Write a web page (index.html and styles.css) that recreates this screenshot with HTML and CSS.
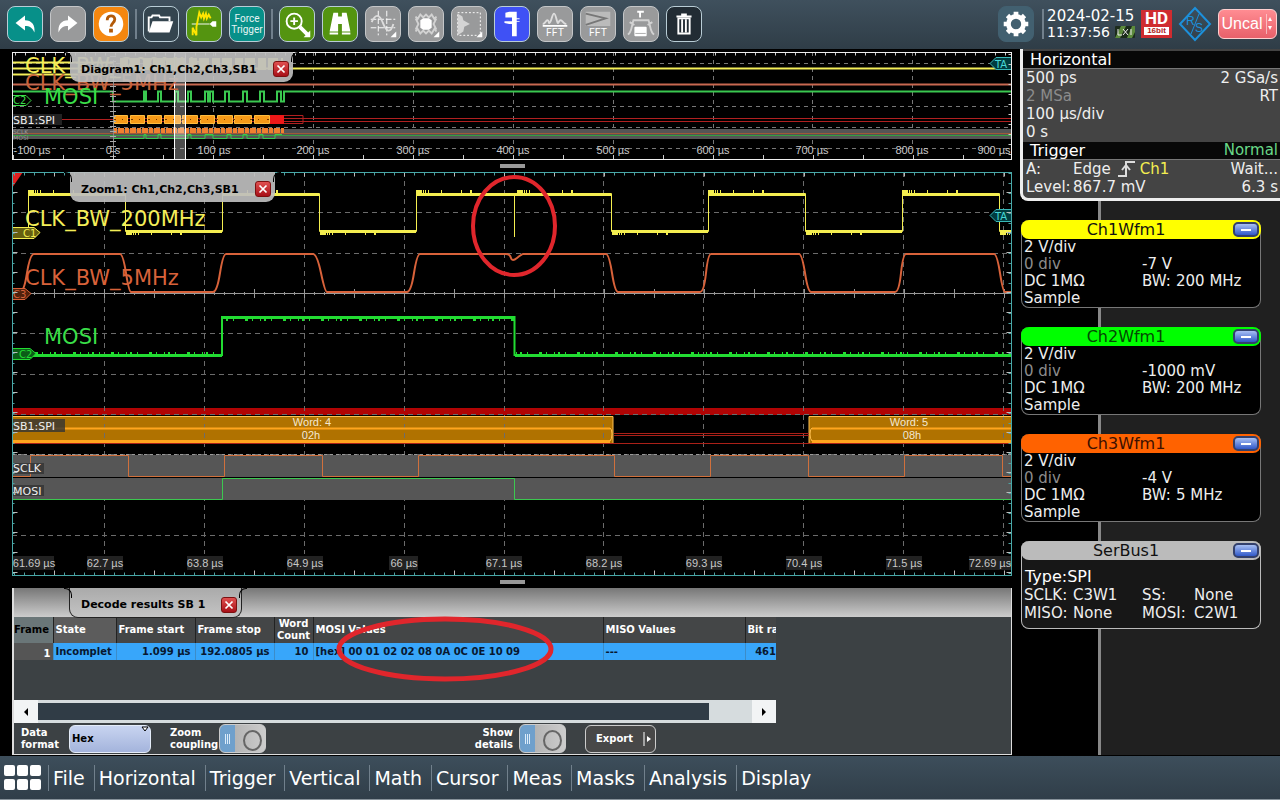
FILE: index.html
```html
<!DOCTYPE html>
<html lang="en">
<head>
<meta charset="utf-8">
<title>Oscilloscope</title>
<link rel="stylesheet" href="styles.css">
</head>
<body>
<header class="topbar">
  <div class="tools">
    <div class="group">
      <button class="tool teal" aria-label="Undo"><svg viewBox="0 0 36 36"><path fill="#fff" d="M8 17 18 9v5c7 0 11 5 10 13-2-5-5-7-10-7v5z"/></svg></button>
      <button class="tool gray" aria-label="Redo"><svg viewBox="0 0 36 36"><path fill="#fff" d="M28 17 18 9v5c-7 0-11 5-10 13 2-5 5-7 10-7v5z"/></svg></button>
      <button class="tool orange" aria-label="Help"><svg viewBox="0 0 36 36"><circle cx="18" cy="18" r="13" fill="#fff"/><path d="M14 14c0-6 8-6 8-1 0 4-4 4-4 8" fill="none" stroke="#b35a08" stroke-width="3"/><rect x="16" y="23" width="4" height="4" fill="#b35a08"/></svg></button>
    </div>
    <span class="sep"></span>
    <div class="group">
      <button class="tool slate" aria-label="Open"><svg viewBox="0 0 36 36"><path d="M5 26V11h3l1-2h7l1 2h10v4" fill="none" stroke="#fff" stroke-width="2"/><path d="M5 27 9 15h22l-4 12z" fill="#fff"/></svg></button>
      <button class="tool green" aria-label="Autoset"><svg viewBox="0 0 36 36"><path d="M5 18h19" stroke="#fff"/><path d="M24 18l3-3h4v6h-4z" fill="#fff"/><path d="M6 30V22l4 8V21l3-15 2 5 2-4 1 5 2-5 1 5 2-4 2 4" fill="none" stroke="#ffe600" stroke-width="2"/></svg></button>
      <button class="tool teal force">Force Trigger</button>
    </div>
    <span class="sep"></span>
    <div class="group">
      <button class="tool green" aria-label="Zoom"><svg viewBox="0 0 36 36" fill="none" stroke="#fff" stroke-width="2"><circle cx="15" cy="15" r="8"/><path d="M15 11v8M11 15h8"/><path d="M21 21l9 9" stroke-width="4"/><path d="M32 25v7h-7z" fill="#fff" stroke="none"/></svg></button>
      <button class="tool green" aria-label="Find"><svg viewBox="0 0 36 36"><path fill="#fff" d="M11 6h5v4h4V6h5l4 20h-9v-8h-4v8H7zM7 27h9v2H7zM20 27h9v2h-9z"/></svg></button>
      <button class="tool gray" aria-label="Cursor"><svg viewBox="0 0 36 36" fill="none" stroke="#fff"><path d="M13 4v26M22 4v26M5 13h26M5 22h26" stroke-dasharray="6 2"/><path d="M6 16c4-9 8-9 12 1s8 11 11 1" stroke="#ddd" stroke-width="2"/><path d="M32 26v6h-6z" fill="#fff" stroke="none"/></svg></button>
      <button class="tool gray" aria-label="Mask"><svg viewBox="0 0 36 36"><path d="M7 10l2 3 3-5 3 3 3-3 3 3 3-3 3 5 2-3M7 26l2-3 3 5 3-3 3 3 3-3 3 3 3-5 2 3M7 12l3 6-3 6M29 12l-3 6 3 6" fill="none" stroke="#d2d2d2" stroke-width="2"/><path d="M12 14l3-2h6l3 2v8l-3 2h-6l-3-2z" fill="#fff"/><path d="M32 26v6h-6z" fill="#fff"/></svg></button>
      <button class="tool gray" aria-label="Histogram"><svg viewBox="0 0 36 36"><rect x="6" y="6" width="24" height="24" fill="none" stroke="#fff" stroke-dasharray="2 2"/><path d="M6 7l5 3 1 4 7 4-6 3-1 5-6 4z" fill="#d4d4d4"/><path d="M32 26v6h-6z" fill="#fff"/></svg></button>
      <button class="tool blue" aria-label="Measure"><svg viewBox="0 0 36 36"><path fill="#fff" d="M11 6l4-1h8v7h3v1h-3v2h3v1h-3v15h-5V18h-3l-5-1v-2h8v-4h-7z"/></svg></button>
      <button class="tool gray" aria-label="FFT"><svg viewBox="0 0 36 36"><path d="M5 18c3 0 3-4 5-4s1 3 2 3c2 0 3-10 5-10s3 10 4 10 1-3 3-3 3 4 6 4" fill="none" stroke="#ddd" stroke-width="2"/><path d="M5 20h26" stroke="#fff" stroke-width="2"/><text x="18" y="31" class="icontext">FFT</text></svg></button>
      <button class="tool gray" aria-label="Gated FFT"><svg viewBox="0 0 36 36"><path d="M5 5h26v15H5z" fill="#bbb"/><path d="M5 7l21 5-21 7" fill="none" stroke="#777" stroke-width="2"/><text x="18" y="31" class="icontext">FFT</text></svg></button>
      <button class="tool gray" aria-label="Mask trigger"><svg viewBox="0 0 36 36"><path d="M4 29c4-1 4-9 6-15h16c2 6 2 14 6 15M6 16l5 3M30 16l-5 3" fill="none" stroke="#d2d2d2" stroke-width="2"/><path d="M14 5h7M17 5v6" stroke="#fff" stroke-width="2"/><rect x="11" y="21" width="13" height="10" rx="1" fill="#fff"/><path d="M12 28h11" stroke="#aaa"/></svg></button>
      <button class="tool dark" aria-label="Delete"><svg viewBox="0 0 36 36"><path d="M10 10h16M15 8h6" stroke="#fff" stroke-width="2"/><path d="M12 12v16h12V12z" fill="none" stroke="#fff" stroke-width="2"/><path d="M16 13v14M20 13v14" stroke="#fff" stroke-width="2"/></svg></button>
    </div>
  </div>
  <div class="status">
    <button class="tool gear" aria-label="Settings"><svg viewBox="0 0 36 36"><circle cx="18" cy="18" r="8" fill="none" stroke="#fff" stroke-width="5"/><path d="M18 5v4M18 27v4M5 18h4M27 18h4M9 9l3 3M24 24l3 3M27 9l-3 3M12 24l-3 3" stroke="#fff" stroke-width="5"/></svg></button>
    <span class="sep"></span>
    <div class="clock"><div class="date">2024-02-15</div><div class="time">11:37:56 <svg class="lxi" viewBox="0 0 20 12"><rect width="20" height="12" rx="1" fill="#1c2c1c"/><path d="M0 12L6 0h5L5 12zM12 12l5-12h3v6l-3 6z" fill="#5c8a3c"/><path d="M3 3v6h4M8 3l5 6M13 3l-5 6M16 3v6" fill="none" stroke="#eee"/></svg></div></div>
    <div class="hd"><b>HD</b><span>16bit</span></div>
    <svg class="rs" viewBox="0 0 34 36"><path d="M17 2l15 16-15 16L2 18z" fill="none" stroke="#1c90dc" stroke-width="2"/><path d="M21 8l-8 20" stroke="#1c90dc"/><text x="8" y="19">R</text><text x="17" y="26">S</text></svg>
    <button class="uncal">Uncal<svg viewBox="0 0 7 20"><path d="M0 0v20" stroke="#fff"/><path d="M2 7l2-4 2 4zM2 12l2 4 2-4z" fill="#fff"/></svg></button>
  </div>
</header>

<main class="screen">
  <section class="plots">
    <div class="plot">
      <svg class="chart" viewBox="12 52 1000 108" role="img" aria-label="Diagram1">
        <g stroke="#777" stroke-dasharray="4 4">
          <path d="M213.500 52v96M313.500 52v96M413.500 52v96M513.500 52v96M613.500 52v96M713.500 52v96M812.500 52v96M912.500 52v96M12 63.500h1000M12 106.500h1000M12 127.500h1000M12 148.500h1000"/>
        </g>
        <rect x="12" y="129" width="1000" height="10" fill="#555"/>
        <path d="M12 133.500h1000" stroke="#a05a38"/><path d="M12 135.500h1000" stroke="#35a040"/>
        <path d="M12 62.500h101M12 68.500h101M12 74.500h101M112 68.500h900" stroke="#f4ee58" stroke-width="2"/>
        <path d="M12 84.500h1000" stroke="#c86850" stroke-width="2"/>
        <path d="M120 64h163" stroke="#f4ee58" stroke-width="12" stroke-dasharray="8 2 10 3"/>
        <path d="M12 91.500h101v10h31v-10h2v10h12v-10h3v10h14v-10h3v10h10v-10h3v10h14v-10h3v10h2v-10h3v10h12v-10h4v10h14v-10h4v10h13v-10h4v10h13v-10h4v10h3v-10H1012" fill="none" stroke="#3ac850" stroke-width="2"/>
        <path d="M113 118.500h899M60 119.500h60M113 121.500h899M284 115.500h19v8h-19" fill="none" stroke="#b02020"/>
        <g fill="#f79a18" stroke="#ffbd40"><path d="M114.500 115.500h13v8h-13zM130.500 115.500h14v8h-14zM147.500 115.500h14v8h-14zM164.500 115.500h16v8h-16zM182.500 115.500h15v8h-15zM200.500 115.500h14v8h-14zM217.500 115.500h15v8h-15zM234.500 115.500h17v8h-17zM254.500 115.500h15v8h-15z"/></g>
        <path d="M270 115h14v9h-14z" fill="#ee1818"/>
        <path d="M114 119.500h156" stroke="#733800" stroke-dasharray="2 6 1 8"/>
        <path d="M113 130.500h171" stroke="#f08030" stroke-width="5" stroke-dasharray="4 1 6 1"/>
        <path d="M113 138.500h31v-4h2v4h12v-4h3v4h27v-4h3v4h14v-4h8v4h14v-4h4v4h12v-4h4v4h12v-4h4v4h12v-4h7" fill="none" stroke="#3ac850"/>
        <path d="M113.500 60v100" stroke="#888"/><path d="M113 56v104" stroke="#aaa" stroke-width="6" stroke-dasharray="1 4"/>
        <path d="M174 52h12v108h-12z" fill="#fff" fill-opacity=".3"/><path d="M174.500 52v108M185.500 52v108" stroke="#fff"/>
        <g class="name"><text x="25" y="73" fill="#f4ee58">CLK_BW_200MHz</text><text x="25" y="90" fill="#c8643c">CLK_BW_5MHz</text><text x="44" y="104" fill="#3ade48">MOSI</text></g>
        <path d="M12 95.500h14l5 5-5 5H12z" fill="none" stroke="#3ade48"/><text x="13" y="104" fill="#3ade48" class="tag">C2</text>
        <path d="M1012 57.500h-16l-6 6 6 6h16z" fill="#003c40" stroke="#38b8b8"/><text x="995" y="68" fill="#48d8d8" class="tag">TA</text>
        <rect x="13" y="114" width="49" height="11" fill="#222"/><text class="bus" x="13" y="124">SB1:SPI</text>
        <text class="tiny" x="13" y="134">SCLK</text><text class="tiny" x="13" y="140">MOSI</text>
        <g class="axis"><text x="32" y="154">-100 µs</text><text x="113" y="154">0 s</text><text x="214" y="154">100 µs</text><text x="313" y="154">200 µs</text><text x="413" y="154">300 µs</text><text x="513" y="154">400 µs</text><text x="613" y="154">500 µs</text><text x="713" y="154">600 µs</text><text x="812" y="154">700 µs</text><text x="912" y="154">800 µs</text><text x="994" y="154">900 µs</text></g>
        <g stroke="#ccc"><path d="M13 157h998" stroke-width="4" stroke-dasharray="1 49"/><path d="M15 54h996M1010 54v104" stroke-width="3" stroke-dasharray="1 9"/></g>
        <rect x="12.500" y="52.500" width="999" height="107" fill="none" stroke="#eee"/>
      </svg>
      <div class="tab"><span>Diagram1: Ch1,Ch2,Ch3,SB1</span><button class="close" aria-label="Close Diagram1"><svg viewBox="0 0 16 16"><path d="M4 4l8 8M12 4l-8 8"/></svg></button></div>
    </div>
    <div class="handle"><i></i></div>
    <div class="plot">
      <svg class="chart" viewBox="12 172 1000 404" role="img" aria-label="Zoom1">
        <rect x="12" y="408" width="1000" height="7" fill="#b00404"/>
        <path d="M12 416h601v27H12zM809 416h203v27H809z" fill="#b07200"/>
        <g stroke="#6c6c6c" stroke-dasharray="5 4">
          <path d="M104.500 172v382M204.500 172v382M304.500 172v382M404.500 172v382M504.500 172v382M603.500 172v382M703.500 172v382M803.500 172v382M903.500 172v382M1003.500 172v382M12 212.500h1000M12 253.500h1000M12 333.500h1000M12 374.500h1000M12 414.500h1000M12 454.500h1000M12 535.500h1000"/>
        </g>
        <rect x="12" y="455" width="1000" height="22" fill="#565656"/><rect x="12" y="478" width="1000" height="22" fill="#565656"/>
        <g stroke="#999"><path d="M12 293.500h1000"/><path d="M14 293.500h998" stroke-width="3" stroke-dasharray="1 9"/><path d="M54 293.500h958" stroke-width="9" stroke-dasharray="1 49"/></g>
        <g fill="none" stroke="#f4ee50">
          <path d="M12 231.500H28.500V193.500H125.500V231.500H222.500V193.500H319.500V231.500H416.500V193.500H611.500V231.500H708.500V193.500H805.500V231.500H902.500V193.500H999.500V231.500H1012M514.500 193v44"/>
          <path d="M12 231.500h16M28 194.500h97M126 231.500h96M222 194.500h97M320 231.500h96M416 194.500h195M612 231.500h96M708 194.500h97M806 231.500h96M902 194.500h97M1000 231.500h12" stroke-width="3"/>
          <path d="M28 192.500h97M126 232.500h96M222 192.500h97M320 232.500h96M416 192.500h195M612 232.500h96M708 192.500h97M806 232.500h96M902 192.500h97M1000 232.500h12" stroke-width="5" stroke-dasharray="6 1 1 1 1 2 1 12 1 19 1 8 2 45"/>
        </g>
        <path d="M12 292H20Q24 292 27 273T34 254H120Q123 254 126 273T131 292H213Q217 292 220 273T226 254H313Q317 254 321 273T327 292H407Q411 292 414 273T420 254H506Q510 254 511 258T517 258T523 254H606Q609 254 612 273T618 292H700Q704 292 706 273T711 254H799Q802 254 805 273T811 292H895Q899 292 901 273T906 254H994Q997 254 1000 273T1005 292H1012" fill="none" stroke="#d8623a" stroke-width="2"/>
        <path d="M12 355.500H222M222 317.500H514M515 355.500H1012" fill="none" stroke="#22dc32" stroke-width="3"/>
        <path d="M222 316v40M514.500 316v40" stroke="#22dc32" stroke-width="2"/>
        <path d="M12 354.500H222M222 318.500h292M516 354.500h496" stroke="#22dc32" stroke-width="5" stroke-dasharray="1 3 2 5 1 11 3 4 1 7"/>
        <path d="M12 428.500H610M812 428.500h200" stroke="#ffa51e" stroke-width="2"/><path d="M12 441.500H610M812 441.500h200" stroke="#ffa51e" stroke-width="3"/>
        <path d="M12 416.500h601v27M1012 416.500H809v27M610 428q2 1 2 6t-2 7M812 428q-2 1-2 6t2 7" fill="none" stroke="#ffc050"/>
        <path d="M614 433.500h195M614 435.500h195M12 443.500h1000" stroke="#aa2018"/>
        <path d="M12 476.500H30.500V455.500H128.500V476.500H224.500V455.500H322.500V476.500H418.500V455.500H614.500V476.500H710.500V455.500H808.500V476.500H904.500V455.500H1002.500V476.500H1012" fill="none" stroke="#d0703c"/>
        <path d="M12 499.500H222.500V478.500H514.500V499.500H1012" fill="none" stroke="#3cc850"/>
        <path d="M12 454.500h1000" stroke="#999" stroke-dasharray="3 3"/>
        <path d="M12 172h11l-11 16z" fill="#e02020"/>
        <path d="M12 227.500h22l6 5-6 6H12z" fill="#665f10" stroke="#f4ee50"/><text class="tag" x="23" y="237" fill="#f4ee50">C1</text>
        <path d="M12 288.500h13l6 5-6 6H12z" fill="#50210c" stroke="#d8623a"/><text class="tag" x="13" y="298" fill="#d8623a">C3</text>
        <path d="M12 348.500h18l6 5-6 6H12z" fill="#0c5c18" stroke="#22dc32"/><text class="tag" x="19" y="358" fill="#22dc32">C2</text>
        <path d="M1012 209.500h-16l-6 6 6 6h16z" fill="#003c40" stroke="#38b8b8"/><text class="tag" x="995" y="220" fill="#48d8d8">TA</text>
        <g class="name"><text x="25" y="226" fill="#f4ee58">CLK_BW_200MHz</text><text x="25" y="285" fill="#d8623a">CLK_BW_5MHz</text><text x="44" y="344" fill="#3ade48">MOSI</text></g>
        <path d="M13 419h52v13H13zM13 463h31v11H13zM13 485h31v11H13z" fill="#333" fill-opacity=".8"/>
        <g class="bus"><text x="13" y="430">SB1:SPI</text><text x="13" y="472">SCLK</text><text x="13" y="495">MOSI</text></g>
        <g class="word"><text x="312" y="426">Word: 4</text><text x="311" y="439">02h</text><text x="909" y="426">Word: 5</text><text x="912" y="439">08h</text></g>
        <path d="M13 556h41v14H13zM87 556h36v14H87zM187 556h36v14h-36zM287 556h36v14h-36zM389 556h29v14h-29zM486 556h36v14h-36zM586 556h36v14h-36zM686 556h36v14h-36zM786 556h36v14h-36zM886 556h36v14h-36zM969 556h42v14h-42z" fill="#222"/>
        <g class="axis"><text x="34" y="567">61.69 µs</text><text x="105" y="567">62.7 µs</text><text x="205" y="567">63.8 µs</text><text x="305" y="567">64.9 µs</text><text x="404" y="567">66 µs</text><text x="504" y="567">67.1 µs</text><text x="604" y="567">68.2 µs</text><text x="704" y="567">69.3 µs</text><text x="804" y="567">70.4 µs</text><text x="904" y="567">71.5 µs</text><text x="990" y="567">72.69 µs</text></g>
        <g stroke="#4ca0a0"><path d="M14 174h998M14 574h998M13 173v402M1010 173v402" stroke-width="3" stroke-dasharray="1 9"/></g>
        <path d="M54 174h958M54 573h958" stroke="#bbb" stroke-width="5" stroke-dasharray="1 49"/>
        <path d="M15 192v384M1009 192v384" stroke="#bbb" stroke-width="5" stroke-dasharray="1 19"/>
        <rect x="12.500" y="172.500" width="999" height="403" fill="none" stroke="#48a8a8"/>
        <ellipse cx="514" cy="226" rx="41" ry="49" fill="none" stroke="#e0262c" stroke-width="4"/>
      </svg>
      <div class="tab"><span>Zoom1: Ch1,Ch2,Ch3,SB1</span><button class="close" aria-label="Close Zoom1"><svg viewBox="0 0 16 16"><path d="M4 4l8 8M12 4l-8 8"/></svg></button></div>
    </div>
    <div class="handle"><i></i></div>
    <section class="decode">
      <div class="tabbar"><div class="tab decodetab"><span>Decode results SB 1</span><button class="close" aria-label="Close decode results"><svg viewBox="0 0 16 16"><path d="M4 4l8 8M12 4l-8 8"/></svg></button></div></div>
      <div class="results">
        <table>
          <colgroup><col class="c-frame"><col class="c-state"><col class="c-time"><col class="c-time"><col class="c-count"><col class="c-mosi"><col class="c-miso"><col class="c-bit"></colgroup>
          <thead><tr><th class="first">Frame</th><th class="lit">State</th><th>Frame start</th><th>Frame stop</th><th>Word Count</th><th>MOSI Values</th><th>MISO Values</th><th>Bit ra</th></tr></thead>
          <tbody><tr><td class="num">1</td><td>Incomplet</td><td class="r">1.099 µs</td><td class="r">192.0805 µs</td><td class="r">10</td><td>[hex] 00 01 02 02 08 0A 0C 0E 10 09</td><td>---</td><td class="r">461</td></tr></tbody>
        </table>
        <div class="scroll"><button aria-label="Scroll left"><svg viewBox="0 0 8 8"><path d="M6 0v8L2 4z"/></svg></button><div class="track"><div class="thumb"></div></div><button aria-label="Scroll right"><svg viewBox="0 0 8 8"><path d="M2 0v8l4-4z"/></svg></button></div>
      </div>
      <div class="options">
        <label for="fmt">Data format</label>
        <div class="pick"><select id="fmt" class="format"><option>Hex</option></select><svg viewBox="0 0 8 6"><path d="M1 1h6L4 5z" fill="#fff" stroke="#000"/></svg></div>
        <label for="zc" class="zc">Zoom coupling</label>
        <input type="checkbox" id="zc" class="toggle">
        <label for="sd" class="sd">Show details</label>
        <input type="checkbox" id="sd" class="toggle">
        <button class="export">Export<svg viewBox="0 0 8 14"><path d="M1 0v14" stroke="#fff"/><path d="M4 4l4 3-4 3z" fill="#fff"/></svg></button>
      </div>
      <svg class="mark" viewBox="0 0 218 68"><ellipse cx="109" cy="34" rx="106" ry="30" fill="none" stroke="#e0262c" stroke-width="5"/></svg>
    </section>
  </section>

  <aside class="side">
    <section class="info">
      <h2>Horizontal</h2>
      <div class="block">
        <p><span>500 ps</span><span>2 GSa/s</span></p><p><span class="dim">2 MSa</span><span>RT</span></p><p><span>100 µs/div</span></p><p><span>0 s</span></p>
      </div>
      <h2>Trigger<span class="normal">Normal</span></h2>
      <div class="block">
        <p><span class="key">A:</span><span>Edge</span><svg class="edge" viewBox="0 0 18 16"><path d="M0 15h8V1h9M4 9l4-5 4 5" fill="none" stroke="#ddd" stroke-width="2"/></svg><span class="ch">Ch1</span><span class="end">Wait...</span></p>
        <p><span class="lev">Level:</span><span>867.7 mV</span><span class="end">6.3 s</span></p>
      </div>
    </section>
    <section class="card yellow"><h3>Ch1Wfm1<button aria-label="Minimize Ch1Wfm1"></button></h3>
      <div class="grid"><span>2 V/div</span><span></span><span class="dim">0 div</span><span>-7 V</span><span>DC 1MΩ</span><span><i>BW:</i>200 MHz</span><span>Sample</span></div></section>
    <section class="card lime"><h3>Ch2Wfm1<button aria-label="Minimize Ch2Wfm1"></button></h3>
      <div class="grid"><span>2 V/div</span><span></span><span class="dim">0 div</span><span>-1000 mV</span><span>DC 1MΩ</span><span><i>BW:</i>200 MHz</span><span>Sample</span></div></section>
    <section class="card tangerine"><h3>Ch3Wfm1<button aria-label="Minimize Ch3Wfm1"></button></h3>
      <div class="grid"><span>2 V/div</span><span></span><span class="dim">0 div</span><span>-4 V</span><span>DC 1MΩ</span><span><i>BW:</i>5 MHz</span><span>Sample</span></div></section>
    <section class="card silver"><h3>SerBus1<button aria-label="Minimize SerBus1"></button></h3>
      <p class="type">Type:<span>SPI</span></p>
      <div class="busgrid"><span>SCLK:</span><span>C3W1</span><span>SS:</span><span>None</span><span>MISO:</span><span>None</span><span>MOSI:</span><span>C2W1</span></div></section>
  </aside>
</main>

<nav class="menu">
  <button class="apps" aria-label="Applications"><i></i><i></i><i></i><i></i><i></i><i></i></button>
  <button>File</button><button>Horizontal</button><button>Trigger</button><button>Vertical</button><button>Math</button><button>Cursor</button><button>Meas</button><button>Masks</button><button>Analysis</button><button>Display</button>
</nav>
</body>
</html>
```
FILE: styles.css
```css
* { box-sizing: border-box; }
body { margin: 0; min-height: 100vh; display: flex; flex-direction: column; background: #000; color: #eee; font-family: "DejaVu Sans", sans-serif; font-size: 15px; }
button, select, input { font: inherit; color: inherit; margin: 0; padding: 0; border: 0; background: none; }
h2, h3, p { margin: 0; font-weight: 400; }
svg { display: block; }

/* top toolbar */
.topbar { display: flex; justify-content: space-between; align-items: center; height: 49px; padding: 0 3px 1px 7px; background: linear-gradient(#3f505d, #2f3d47); }
.tools, .status { display: flex; align-items: center; gap: 6px; }
.group { display: flex; gap: 7px; }
.sep { width: 2px; height: 30px; background: #71808c; }
.tool { width: 36px; height: 36px; border: 1px solid #b9cdd6; border-radius: 8px; overflow: hidden; }
.tool svg { width: 34px; height: 34px; }
.teal { background: #079089; }
.gray { background: #999a9b; border-color: #c4c6c8; }
.orange { background: #f5870f; }
.slate { background: #34454f; }
.green { background: #549410; }
.blue { background: #3f51f5; }
.dark { background: #222c34; }
.gear { background: #426070; border-color: #426070; }
.force { font: 10px/11px "Roboto", sans-serif; color: #e4f4f4; }
.icontext { font: 11px "Roboto", sans-serif; fill: #fff; text-anchor: middle; }
.clock { font-size: 14px; line-height: 16px; color: #fff; }
.date { font-size: 15px; }
.time { display: flex; align-items: center; gap: 5px; }
.lxi { width: 20px; height: 12px; }
.status .sep { margin: 0 -3px 0 2px; }
.hd { width: 31px; height: 28px; background: #cf2c30; text-align: center; color: #fff; }
.hd b { display: block; font: bold 17px/17px "Roboto", sans-serif; }
.hd span { display: block; margin: 0 3px; background: #fff; color: #b02020; font: bold 8px/8px "Liberation Sans", sans-serif; }
.rs { width: 34px; height: 36px; }
.rs text { font: 12px "Liberation Sans", sans-serif; fill: #1c90dc; }
.uncal { display: flex; align-items: center; justify-content: center; gap: 4px; width: 59px; height: 30px; border: 1px solid #ffd0d0; border-radius: 6px; background: linear-gradient(#ff8c92, #e8606a); font: 16px "Liberation Sans", sans-serif; color: #fff; }
.uncal svg { width: 7px; height: 20px; }

/* plots */
.screen { flex: 1; display: flex; }
.plots { flex: 1; min-width: 0; padding: 3px 0 0 12px; }
.plot { position: relative; }
.chart { width: 100%; height: auto; }
.chart text { font-family: "DejaVu Sans", sans-serif; }
.chart .name text { font-size: 21px; }
.chart .tag { font-size: 10px; }
.chart .bus, .chart .bus text { font-size: 11px; fill: #eee; }
.chart .tiny { font-size: 6px; fill: #999; }
.chart .axis text { font: 11px "Liberation Sans", sans-serif; fill: #c8c8c8; text-anchor: middle; }
.chart .word text { font: 11px "Liberation Sans", sans-serif; fill: #f4e8d0; text-anchor: middle; }
.handle { height: 12px; padding-top: 4px; }
.handle i { display: block; width: 25px; height: 4px; margin: 0 auto; background: #999; }
.tab { position: absolute; left: 58px; top: 0; display: flex; align-items: center; gap: 16px; height: 30px; padding: 4px 4px 0 11px; border-radius: 0 0 9px 9px; background: rgba(190, 190, 190, .92); color: #000; font: bold 11px "DejaVu Sans", sans-serif; white-space: nowrap; }
.tab::before, .tab::after { content: ""; position: absolute; top: 0; width: 7px; height: 9px; border-top: 1px solid #000; }
.tab::before { left: -6px; border-right: 1px solid #000; border-top-right-radius: 7px; }
.tab::after { right: -6px; border-left: 1px solid #000; border-top-left-radius: 7px; }
.close { width: 16px; height: 16px; border: 1px solid #7c1010; border-radius: 3px; background: linear-gradient(#e05050, #a81018); }
.close svg { width: 14px; height: 14px; stroke: #fff; stroke-width: 2; }

/* decode results */
.decode { position: relative; border: solid #ddd; border-width: 0 1px 1px 2px; background: #3c4144; font: bold 10px/12px "DejaVu Sans", sans-serif; color: #fff; }
.tabbar { height: 29px; padding-left: 55px; background: linear-gradient(#777, #ccc); }
.decodetab { position: relative; left: auto; display: inline-flex; border: solid #222; border-width: 0 1px 1px; background: linear-gradient(#aaa, #c4c4c4); }
.results { width: 762px; max-width: 100%; overflow: hidden; }
table { table-layout: fixed; width: 762px; border-collapse: collapse; }
.c-frame { width: 39px; } .c-state { width: 63px; } .c-time { width: 79px; } .c-count { width: 39px; } .c-mosi { width: 290px; } .c-miso { width: 142px; } .c-bit { width: 31px; }
th, td { padding: 0 2px; text-align: left; white-space: nowrap; overflow: hidden; }
th { height: 26px; border-right: 1px solid #222; background: #444647; }
th:nth-child(5) { white-space: normal; text-align: center; padding: 0; }
th.first { background: #6a7678; color: #000; padding: 0; }
th.lit { background: #5c5c5c; }
th:last-child { padding-right: 0; border-right: 0; }
td { height: 17px; background: #38a6fa; color: #081830; border-right: 1px solid #3c8cc8; }
td.r { text-align: right; padding-right: 4px; }
td.num { text-align: right; background: #555; color: #fff; vertical-align: bottom; }
td.r:last-child { padding-right: 0; border-right: 0; }
.scroll { display: flex; height: 23px; margin-top: 40px; }
.scroll button { width: 24px; background: #f2f4f5; display: grid; place-items: center; }
.scroll svg { width: 8px; height: 8px; }
.track { flex: 1; padding: 3px 0; background: #d6dcde; }
.thumb { width: 94%; height: 17px; background: #303c46; }
.options { display: flex; align-items: center; height: 31px; padding-left: 7px; }
.options label { width: 48px; }
.pick { position: relative; }
.pick svg { position: absolute; right: 2px; top: 1px; width: 8px; height: 6px; pointer-events: none; }
.format { display: block; width: 82px; height: 28px; padding: 0 2px; border: 1px solid #e4ecf8; border-radius: 6px; appearance: none; background: linear-gradient(#c8d4f0, #a4b4dc); color: #000; }
.options .zc { margin-left: 19px; width: 49px; }
.toggle { appearance: none; position: relative; width: 47px; height: 29px; border: 1px solid #ccc; border-radius: 6px; background: linear-gradient(90deg, #6fa0cc 15px, #b4b4b4 15px, #ccc); }
.toggle::before { content: ""; position: absolute; left: 5px; top: 9px; width: 6px; height: 10px; background: repeating-linear-gradient(90deg, #dcecfa 0 1px, transparent 1px 2px); }
.toggle::after { content: ""; position: absolute; left: 23px; top: 5px; width: 15px; height: 17px; border: 2px solid #666; border-radius: 50%; }
.options .sd { margin-left: 206px; width: 47px; padding-right: 6px; text-align: right; }
.export { display: flex; align-items: center; justify-content: space-between; width: 71px; height: 28px; margin-left: 19px; padding: 0 4px 0 10px; border: 1px solid #ccc; border-radius: 6px; background: #484848; }
.export svg { width: 8px; height: 14px; }
.mark { position: absolute; left: 322px; top: 27px; width: 218px; height: 68px; }

/* side panel */
.side { width: 260px; margin-left: 8px; background: linear-gradient(90deg, #000 78px, #888 78px 81px, #202020 81px); }
.info { padding: 2px 0 0; border: solid #eee; border-width: 0 0 3px 3px; border-radius: 0 0 0 8px; background: #444; height: 152px; margin-bottom: 19px; }
.info h2 { display: flex; justify-content: space-between; height: 17px; padding: 0 2px 0 7px; background: #080808; font-size: 16px; line-height: 17px; color: #fff; }
.info .normal { font-size: 15px; color: #6ad888; }
.info .block { border-top: 1px solid #777; }
.info p { display: flex; justify-content: space-between; height: 18px; padding: 0 2px 0 3px; line-height: 18px; }
.info .block:first-of-type { height: 74px; }
.info .block:last-child p { justify-content: flex-start; }
.dim { color: #8c8c8c; }
.key, .lev { width: 47px; }
.edge { width: 18px; height: 16px; margin: 1px 4px 0 7px; }
.ch { color: #f4ee50; }
.end { margin-left: auto; }
.card { width: 240px; height: 88px; margin: 0 0 19px 1px; border: 1px solid #777; border-top: 0; border-radius: 8px; background: #000; line-height: 17px; }
.card h3 { position: relative; height: 19px; margin: 0 -1px; padding-right: 30px; border-radius: 8px; text-align: center; font-size: 16px; line-height: 19px; color: #111; }
.card h3 button { position: absolute; right: 2px; top: 2px; width: 26px; height: 15px; border: 2px solid #33406c; border-radius: 5px; background: linear-gradient(#fff, #fff) center / 10px 2px no-repeat, linear-gradient(#a8c0f4, #3058c8); }
.yellow h3 { background: #ff0; }
.lime h3 { background: #0f0; color: #044804; }
.tangerine h3 { background: #ff6200; color: #3c1000; }
.silver h3 { background: #bbb; }
.grid { display: grid; grid-template-columns: 118px 1fr; grid-auto-rows: 17px; padding-left: 2px; }
.grid i { display: inline-block; width: 34px; font-style: normal; }
.silver { background: #171717; border-color: #bbb; }
.type { padding: 8px 0 0 3px; font-size: 16px; line-height: 18px; color: #fff; }
.busgrid { display: grid; grid-template-columns: 49px 69px 52px 1fr; padding-left: 2px; line-height: 18px; }

/* bottom menu */
.menu { display: flex; align-items: center; height: 44px; margin-top: 1px; border-bottom: 1px solid #87929a; background: linear-gradient(#3d4e5b, #303e49); font-size: 19px; }
.menu button { height: 26px; padding: 0 9px 0 4px; border-left: 1px solid #71808c; line-height: 26px; color: #fff; }
.menu .apps { display: grid; grid-template-columns: repeat(3, 11px); gap: 2px; padding: 0; margin: 0 7px 0 4px; border: 0; }
.apps i { height: 11px; border-radius: 2px; background: #fff; }
```
